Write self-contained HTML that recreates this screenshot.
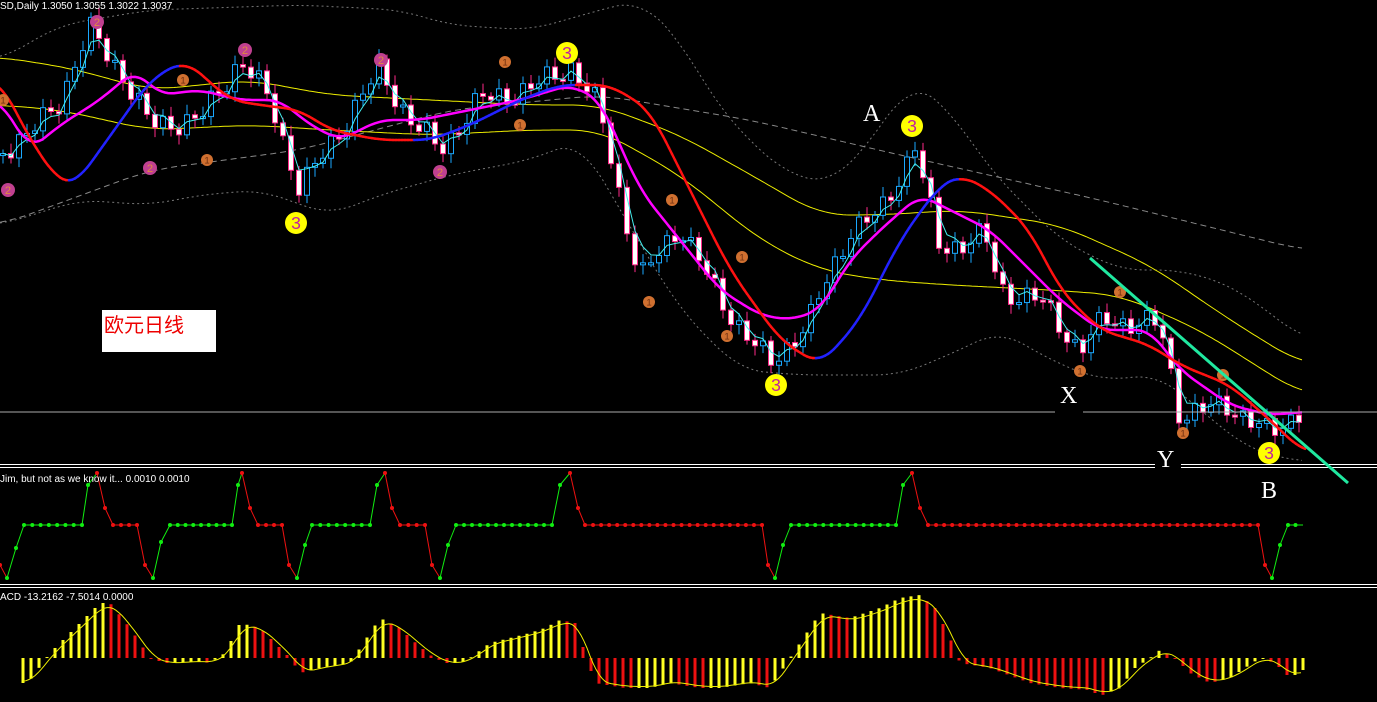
<!DOCTYPE html>
<html><head><meta charset="utf-8"><style>
html,body{margin:0;padding:0;background:#000;width:1377px;height:702px;overflow:hidden}
svg{display:block}
</style></head><body>
<svg id="c" width="1377" height="702" xmlns="http://www.w3.org/2000/svg" font-family="Liberation Sans, sans-serif">
<rect width="1377" height="702" fill="#000"/>
<g id="g"></g>
<line x1="0" y1="412" x2="1055" y2="412" stroke="#aaa" stroke-width="1"/>
<line x1="1083" y1="412" x2="1377" y2="412" stroke="#aaa" stroke-width="1"/>
<line x1="0" y1="464.5" x2="1155" y2="464.5" stroke="#fff"/><line x1="0" y1="467.5" x2="1155" y2="467.5" stroke="#fff"/>
<line x1="1181" y1="464.5" x2="1377" y2="464.5" stroke="#fff"/><line x1="1181" y1="467.5" x2="1377" y2="467.5" stroke="#fff"/>
<line x1="0" y1="584.5" x2="1377" y2="584.5" stroke="#fff"/><line x1="0" y1="587.5" x2="1377" y2="587.5" stroke="#fff"/>
<line x1="1090" y1="258" x2="1348" y2="483" stroke="#20e8a0" stroke-width="3"/>
<text x="0" y="9" fill="#fff" font-size="10">SD,Daily  1.3050 1.3055 1.3022 1.3037</text>
<text x="0" y="482" fill="#fff" font-size="10">Jim, but not as we know it...  0.0010 0.0010</text>
<text x="0" y="600" fill="#fff" font-size="10">ACD -13.2162 -7.5014 0.0000</text>
<g font-family="Liberation Serif, serif" font-size="24" fill="#fff">
<text x="863" y="121">A</text><text x="1060" y="403">X</text><text x="1157" y="467">Y</text><text x="1261" y="498">B</text></g>
<rect x="102" y="310" width="114" height="42" fill="#fff"/>
<text x="104" y="332" fill="#e00" font-size="20" font-family="Liberation Sans, Noto Sans CJK SC, sans-serif">欧元日线</text>
</svg>
<script>
var NS="http://www.w3.org/2000/svg",g=document.getElementById('g');
function el(t,a){var e=document.createElementNS(NS,t);for(var k in a)e.setAttribute(k,a[k]);g.appendChild(e);return e;}
function interp(kp,x){if(x<=kp[0][0])return kp[0][1];for(var i=1;i<kp.length;i++)if(x<=kp[i][0]){var a=kp[i-1],b=kp[i],t=(x-a[0])/(b[0]-a[0]);return a[1]+(b[1]-a[1])*t;}return kp[kp.length-1][1];}
function sm(kp,x,w){var s=0,n=0;for(var d=-w;d<=w;d+=2){s+=interp(kp,x+d);n++;}return s/n;}
var kp=[[0,150],[30,135],[60,100],[90,30],[120,70],[150,125],[200,120],[240,60],[270,100],[300,190],[330,145],[380,70],[410,120],[440,150],[480,100],[530,90],[570,65],[600,110],[640,280],[680,225],[720,300],[770,365],[810,320],[850,230],[880,215],[915,145],[940,250],[985,235],[1000,290],[1040,300],[1080,350],[1105,320],[1160,325],[1180,415],[1230,405],[1270,435],[1300,410]];
var N=163,X=[],C=[];
for(var i=0;i<N;i++){var x=3+i*8;X.push(x);C.push(interp(kp,x)+9*Math.sin(i*2.1)+6*Math.sin(i*0.9+1));}
function ema(a,n){var k=2/(n+1),r=[a[0]];for(var i=1;i<a.length;i++)r.push(r[i-1]+k*(a[i]-r[i-1]));return r;}
function kline(k,col,w,dash,sw){sw=sw||20;var d='';for(var x=0;x<=1303;x+=3)d+=(x?'L':'M')+x+' '+sm(k,x,sw).toFixed(1);var e=el('path',{d:d,stroke:col,'stroke-width':w,fill:'none'});if(dash)e.setAttribute('stroke-dasharray',dash);}
function line(v,col,w){var d='';for(var i=0;i<N;i++)d+=(i?'L':'M')+X[i]+' '+v[i].toFixed(1);el('path',{d:d,stroke:col,'stroke-width':w,fill:'none'});}
kline([[0,60],[60,25],[150,10],[300,5],[400,10],[450,25],[530,30],[600,10],[640,0],[680,40],[720,110],[780,170],[830,185],[880,130],[910,80],[950,110],[990,170],[1060,240],[1120,270],[1180,270],[1230,285],[1280,320],[1303,340]],'#777',1,'2,3',25);
kline([[0,225],[80,200],[150,205],[200,195],[260,190],[330,215],[380,195],[450,175],[530,160],[580,140],[620,210],[680,310],[740,370],[800,375],[900,375],[960,350],[1000,330],[1050,360],[1100,380],[1160,375],[1200,410],[1250,450],[1303,462]],'#777',1,'2,3',25);
kline([[0,225],[150,170],[300,150],[450,110],[600,95],[750,120],[900,155],[1100,200],[1303,250]],'#888',1,'6,4',30);
kline([[0,57],[70,68],[150,90],[250,80],[330,95],[430,100],[530,105],[600,105],[680,135],[760,180],[820,215],[880,215],[960,210],[1060,225],[1150,265],[1230,320],[1303,365]],'#ee0',1,null,30);
kline([[0,105],[60,110],[150,130],[250,125],[330,130],[430,135],[530,130],[600,130],[680,175],[760,240],[820,270],[880,280],[950,285],[1050,290],[1120,295],[1200,330],[1303,395]],'#ee0',1,null,30);
for(var i=0;i<N;i++){var o=i?C[i-1]:C[0],c=C[i],x=X[i];var hi=Math.min(o,c)-4-6*Math.abs(Math.sin(i*1.7)),lo=Math.max(o,c)+4+6*Math.abs(Math.cos(i*1.3));
var bear=c>o,col=bear?'#ff2a8a':'#1aa8ff';
el('line',{x1:x,y1:hi,x2:x,y2:lo,stroke:col,'stroke-width':1});
var t=Math.min(o,c),h=Math.max(2,Math.abs(c-o));
el('rect',{x:x-2.5,y:t,width:5,height:h,fill:bear?'#fff':'#000',stroke:col,'stroke-width':1});}
line(ema(C,3),'#4ee',1);
kline([[0,100],[30,150],[60,125],[100,100],[135,70],[160,95],[200,90],[240,100],[280,100],[310,125],[340,140],[380,120],[420,120],[470,110],[520,100],[570,85],[600,100],[640,190],[680,240],[720,290],[760,315],[790,320],[820,310],[850,260],[880,230],[920,195],[950,210],[990,230],[1030,270],[1060,300],[1100,330],[1150,330],[1180,370],[1230,405],[1270,415],[1303,412]],'#f0f',2.5,null,14);
var R=[[0,80],[30,140],[60,183],[75,185],[100,150],[150,80],[185,60],[230,100],[260,105],[300,110],[330,130],[380,140],[430,140],[470,125],[520,100],[560,85],[610,85],[650,110],[690,190],[730,270],[780,340],[820,365],[860,320],[900,240],[940,185],[960,175],[990,190],[1030,230],[1060,290],[1100,330],[1150,345],[1180,365],[1230,385],[1270,420],[1303,452]];
for(var x=0;x<1303;x+=3){var a=sm(R,x,16),b=sm(R,x+3,16);el('line',{x1:x,y1:a,x2:x+3,y2:b,stroke:b<a-0.01?'#22f':'#f11','stroke-width':2.5,'stroke-linecap':'round'});}
function circ(x,y,rad,f,t,tc){el('circle',{cx:x,cy:y,r:rad,fill:f});var e=el('text',{x:x,y:y+rad*0.55,'text-anchor':'middle','font-size':rad*1.6,fill:tc});e.textContent=t;}
[[8,190],[97,22],[150,168],[245,50],[381,60],[440,172]].forEach(function(p){circ(p[0],p[1],7,'#c04090','2','#e08a40');});
[[3,100],[183,80],[207,160],[505,62],[520,125],[649,302],[672,200],[742,257],[727,336],[1080,371],[1120,292],[1183,433],[1223,375]].forEach(function(p){circ(p[0],p[1],6,'#d07030','1','#703010');});
[[296,223],[567,53],[776,385],[912,126],[1269,453]].forEach(function(p){circ(p[0],p[1],11,'#ff0','3','#c020a0');});
var J=[[0,565,'r'],[7,578,'g'],[16,548,'g'],[24,525,'g'],[82,525,'g'],[88,485,'g'],[97,473,'r'],[105,508,'r'],[113,525,'r'],[137,525,'r'],[145,565,'r'],[153,578,'g'],[161,542,'g'],[170,525,'g'],[232,525,'g'],[238,485,'g'],[242,473,'r'],[250,508,'r'],[258,525,'r'],[282,525,'r'],[289,565,'r'],[297,578,'g'],[305,545,'g'],[312,525,'g'],[370,525,'g'],[377,485,'g'],[385,473,'r'],[392,508,'r'],[400,525,'r'],[425,525,'r'],[432,565,'r'],[440,578,'g'],[448,545,'g'],[456,525,'g'],[552,525,'g'],[560,485,'g'],[570,473,'r'],[578,508,'r'],[585,525,'r'],[762,525,'r'],[768,565,'r'],[775,578,'g'],[783,545,'g'],[791,525,'g'],[896,525,'g'],[903,485,'g'],[912,473,'r'],[920,508,'r'],[928,525,'r'],[1258,525,'r'],[1265,565,'r'],[1272,578,'g'],[1280,545,'g'],[1288,525,'g'],[1303,525,'g']];
for(var i=1;i<J.length;i++){var a=J[i-1],b=J[i],col=a[2]=='g'?'#1e1':'#e11';el('line',{x1:a[0],y1:a[1],x2:b[0],y2:b[1],stroke:col});
var n=Math.max(1,Math.round((b[0]-a[0])/8));for(var k=0;k<n;k++){var t=k/n;el('circle',{cx:a[0]+(b[0]-a[0])*t,cy:a[1]+(b[1]-a[1])*t,r:2,fill:col});}}
var MK=[[23,-25],[30,-22],[50,5],[70,25],[100,55],[110,55],[130,30],[150,0],[165,-5],[180,-5],[195,-3],[210,-5],[225,5],[240,35],[260,30],[270,20],[290,0],[300,-15],[320,-10],[350,-5],[380,40],[400,30],[410,20],[430,3],[445,-5],[460,-5],[470,0],[490,15],[510,20],[530,25],[545,30],[560,38],[575,35],[595,-25],[625,-30],[650,-30],[670,-25],[700,-30],[720,-30],[750,-25],[770,-30],[820,45],[850,40],[880,50],[900,60],[920,63],[935,50],[950,20],[960,-5],[990,-10],[1030,-25],[1060,-30],[1090,-32],[1100,-38],[1120,-30],[1135,-10],[1150,0],[1160,8],[1175,0],[1190,-15],[1210,-25],[1230,-20],[1260,0],[1275,-5],[1290,-20],[1303,-12]];
var base=658,d='';
for(var x=23;x<=1303;x+=8){var v=interp(MK,x),pv=interp(MK,x-8);var col=v>=pv?'#ff2':'#e11';
el('rect',{x:x-1.5,y:v>0?base-v:base,width:3,height:Math.max(1,Math.abs(v)),fill:col});}
for(var x=23;x<=1303;x+=3){var v=sm(MK,x-4,10)*0.95;d+=(x==23?'M':'L')+x+' '+(base-v).toFixed(1);}
el('path',{d:d,stroke:'#ee0','stroke-width':1,fill:'none'});
</script>
</body></html>
